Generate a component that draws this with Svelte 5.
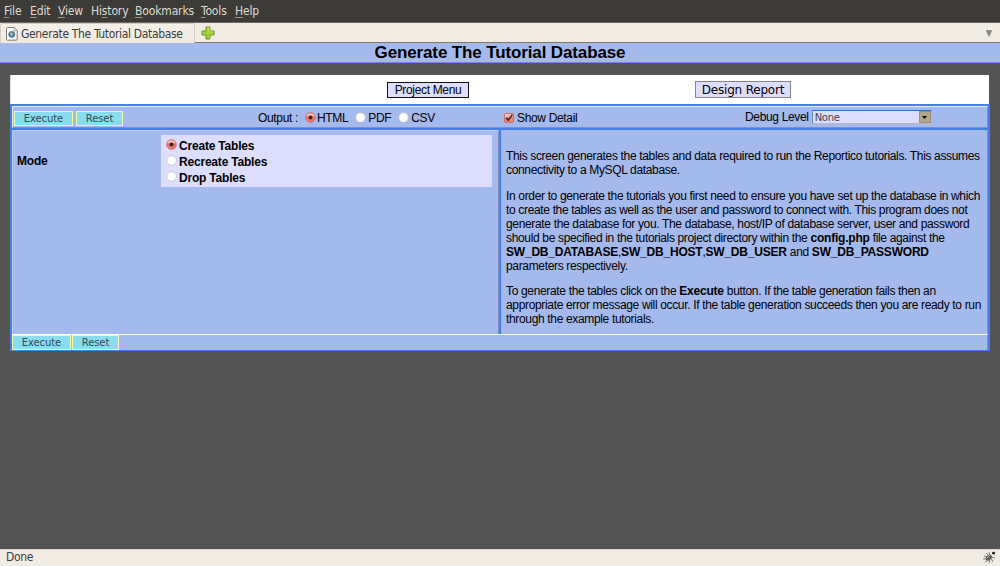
<script>
  const menus = ['File', 'Edit', 'View', 'History', 'Bookmarks', 'Tools', 'Help'];
  const accel = [0, 0, 0, 2, 0, 0, 0];
  const outputs = ['HTML', 'PDF', 'CSV'];
  const modes = ['Create Tables', 'Recreate Tables', 'Drop Tables'];
  let output = $state('HTML');
  let mode = $state('Create Tables');
  let detail = $state(true);
</script>

{#snippet radio(on)}
  <svg class="radio" width="11" height="11" viewBox="0 0 11 11">
    <circle cx="5.5" cy="5.5" r="4.8" fill={on ? '#f07a68' : '#fff'} stroke={on ? '#cc6258' : '#c3c0c8'} stroke-width=".8" />
    {#if on}
      <path d="M1.5 4.5a4.1 4.1 0 0 1 8 0q-4-1.6-8 0z" fill="#fac4b8" />
      <circle cx="5.5" cy="5.5" r="2" fill="#3c2525" />
    {/if}
  </svg>
{/snippet}

<div class="window">
  <nav class="menubar">
    {#each menus as m, i}
      <span>{m.slice(0, accel[i])}<u>{m[accel[i]]}</u>{m.slice(accel[i] + 1)}</span>
    {/each}
  </nav>

  <div class="tabs">
    <div class="tab">
      <svg width="12" height="14" viewBox="0 0 12 14">
        <path d="M1.5.5h6.7l3 3v8.7a1 1 0 0 1-1 1H1.5a1 1 0 0 1-1-1V1.5a1 1 0 0 1 1-1z" fill="#fafaf8" stroke="#777a76" />
        <path d="M8 .8V4h3" fill="#ddd" stroke="#999b96" stroke-width=".7" />
        <circle cx="5.7" cy="7.4" r="3" fill="#4c7bb0" stroke="#42648a" stroke-width=".7" />
        <path d="M4 6l2-.8 1.2 1.5-1.6 2.5L4.4 8z" fill="#a6c789" />
      </svg>
      <span>Generate The Tutorial Database</span>
    </div>
    <svg class="plus" width="14" height="14" viewBox="0 0 14 14">
      <path d="M5 1h4v4h4v4H9v4H5V9H1V5h4z" fill="#a3cd3a" stroke="#6e9628" />
      <path d="M6 2h2v4h4" fill="none" stroke="#c8e573" stroke-width=".9" />
    </svg>
    <svg class="more" width="6" height="7" viewBox="0 0 6 7"><path d="M.3.5h5.4L3 6.3z" fill="#8d8c86" stroke="#6f6d67" stroke-width=".6" /></svg>
  </div>

  <h1><span>Generate The Tutorial Database</span></h1>

  <main>
    <div class="links">
      <button class="project">Project Menu</button>
      <button class="design">Design Report</button>
    </div>

    <div class="frame">
      <div class="bar">
        <button class="act exe">Execute</button>
        <button class="act res">Reset</button>
        <div class="output">
          <span class="lead">Output :</span>
          {#each outputs as o}
            <!-- svelte-ignore a11y_click_events_have_key_events, a11y_no_static_element_interactions -->
            <span class="opt" onclick={() => (output = o)}>{@render radio(output === o)}<span>{o}</span></span>
          {/each}
        </div>
        <!-- svelte-ignore a11y_click_events_have_key_events, a11y_no_static_element_interactions -->
        <div class="detail" onclick={() => (detail = !detail)}>
          <svg width="10" height="10" viewBox="0 0 10 10">
            <rect x=".5" y=".5" width="9" height="9" rx="1" fill={detail ? '#f08371' : '#fff'} stroke="#cc7468" />
            {#if detail}
              <path d="M1 1h8v3Q5 3 1 5z" fill="#f9b9aa" />
              <path d="M2.2 4.8l2 2.5L8.4 1.6" fill="none" stroke="#3d2626" stroke-width="1.6" />
            {/if}
          </svg>
          <span>Show Detail</span>
        </div>
        <div class="debug">
          <span>Debug Level</span>
          <div class="select"><span>None</span><i><svg width="5" height="3" viewBox="0 0 5 3"><path d="M0 0h5L2.5 3z" /></svg></i></div>
        </div>
      </div>

      <div class="body">
        <section class="criteria">
          <b class="label">Mode</b>
          <div class="modes">
            {#each modes as m}
              <!-- svelte-ignore a11y_click_events_have_key_events, a11y_no_static_element_interactions -->
              <div class="mode" onclick={() => (mode = m)}>{@render radio(mode === m)}<b>{m}</b></div>
            {/each}
          </div>
        </section>
        <section class="help">
          <p>This screen generates the tables and data required to run the Reportico tutorials. This assumes<br />connectivity to a MySQL database.</p>
          <p>In order to generate the tutorials you first need to ensure you have set up the database in which<br />to create the tables as well as the user and password to connect with. This program does not<br />generate the database for you. The database, host/IP of database server, user and password<br />should be specified in the tutorials project directory within the <b>config.php</b> file against the<br /><b>SW_DB_DATABASE</b>,<b>SW_DB_HOST</b>,<b>SW_DB_USER</b> and <b>SW_DB_PASSWORD</b><br />parameters respectively.</p>
          <p>To generate the tables click on the <b>Execute</b> button. If the table generation fails then an<br />appropriate error message will occur. If the table generation succeeds then you are ready to run<br />through the example tutorials.</p>
        </section>
      </div>

      <div class="foot">
        <button class="act exe">Execute</button>
        <button class="act res">Reset</button>
      </div>
    </div>
  </main>

  <footer>
    <span>Done</span>
    <svg width="14" height="14" viewBox="0 0 14 14">
      <path d="M3 3l3 3M1 6l4 1M0 9l5 0M2 12l4-3M6 13l1-4M10 12L8 8M12 8L8 7M6 2l1 4" stroke="#85827c" stroke-width="1" />
      <ellipse cx="5.8" cy="7.6" rx="3.5" ry="2.4" transform="rotate(-40 5.8 7.6)" fill="#62615e" />
      <circle cx="10" cy="2.8" r="2.6" fill="#f8f8f6" />
      <circle cx="10.6" cy="3" r="1.6" fill="#222" />
      <path d="M4 8l3-3" stroke="#b5b3ad" />
    </svg>
  </footer>
</div>

<style>
  :global(body) { margin: 0; background: #545454; }
  * { box-sizing: border-box; }
  button { padding: 0; margin: 0; border-radius: 0; display: flex; align-items: center; justify-content: center; white-space: nowrap; }
  svg { display: block; flex: none; }
  b { letter-spacing: -.2px; }
  .window { width: 1000px; height: 566px; display: flex; flex-direction: column; background: #545454; font: 12px/14px "Liberation Sans", Arial, sans-serif; letter-spacing: -.34px; color: #000; overflow: hidden; white-space: nowrap; }
  .menubar { height: 22px; flex: none; background: #3c3b37; color: #dfdbd2; display: grid; grid-template-columns: 26px 28px 33px 44px 66px 34px 40px; padding-left: 4px; font: 12px/22px "DejaVu Sans Condensed", "DejaVu Sans", sans-serif; letter-spacing: -.15px; }
  .menubar u { text-underline-offset: 2px; text-decoration-color: #98948c; }
  .tabs { height: 21px; flex: none; background: #f0ebe3; border-top: 1px solid #6b6963; border-bottom: 1px solid #85765f; display: flex; }
  .tab { width: 195px; height: 20px; padding-left: 5px; display: flex; align-items: center; gap: 3px; border: 1px solid #d5cdc0; border-bottom: 0; border-radius: 3px 3px 0 0; background: linear-gradient(#f5f0e8, #efe9df); font: 12px/20px "DejaVu Sans Condensed", "DejaVu Sans", sans-serif; color: #3c3c3c; }
  .plus { margin: 3px 0 0 6px; }
  .more { margin: 7px 8px 0 auto; }
  h1 { margin: 0; height: 20px; flex: none; background: #a4b9ec; border-bottom: 1px solid #8080f0; font-size: 17px; line-height: 20px; text-align: center; letter-spacing: -.13px; }
  main { margin: 12px 10px 0 10px; }
  .links { background: #fff; height: 29px; margin-right: 1px; display: flex; border-left: 1px solid #ddd; }
  .links button { background: #ddf; color: #000; }
  .project { width: 82px; height: 16px; margin-top: 7px; margin-left: 376px; border: 1px solid #111; font: 12px "Liberation Sans", Arial, sans-serif; letter-spacing: -.34px; }
  .design { width: 96px; height: 17px; margin-top: 6px; margin-left: 226px; border: 1px solid #858585; font: 12px "DejaVu Sans", sans-serif; letter-spacing: -.2px; }
  .frame { height: 247px; border: 2px solid #4580e9; border-bottom-width: 1px; background: #4580e9; display: flex; flex-direction: column; }
  .bar { height: 22px; flex: none; background: #a4b9ec; border: 1px solid #e3eaff; border-right-color: #7e8fc0; border-bottom-color: #7e8fc0; display: grid; grid-template-columns: 62px 182px 246px 241px 1fr; padding: 2px 0 0 1px; align-items: center; }
  .act { background: #88ddee; border: 1px solid #eefaa8; color: #334a4e; font: 10px "DejaVu Sans", sans-serif; height: 15px; letter-spacing: -.1px; }
  .exe { width: 59px; }
  .res { width: 47px; }
  .output, .detail, .debug, .opt { display: flex; align-items: center; }
  .output { padding-bottom: 1px; }
  .lead { width: 47px; }
  .opt { gap: 2px; margin-right: 7px; }
  .opt:nth-child(2) { gap: 1px; }
  .detail { gap: 3px; padding-bottom: 1px; }
  .debug { gap: 3px; padding-bottom: 2px; }
  .select { width: 120px; height: 14px; background: #ddf; border: 1px solid #b9b9c4; border-top-color: #3c6ca3; border-left-color: #6d88b8; display: flex; justify-content: space-between; font: 10px/13px "DejaVu Sans", sans-serif; letter-spacing: -.3px; color: #444; padding-left: 2px; }
  .select i { width: 12px; background: #b3a589; border: 1px solid #9c8f77; display: flex; align-items: center; justify-content: center; }
  .body { margin-top: 2px; height: 202px; flex: none; display: grid; grid-template-columns: 487px 487px; gap: 2px; }
  .body section { background: #a4b9ec; border: 1px solid #bccbf3; border-right-color: #7e8fc0; border-bottom-color: #7e8fc0; }
  .criteria { display: grid; grid-template-columns: 144px 331px; padding: 4px 0 0 4px; align-items: start; }
  .label { padding-top: 19px; }
  .modes { height: 52px; background: #ddf; padding: 2px 0 0 5px; }
  .mode { height: 16px; display: flex; align-items: center; gap: 2px; }
  .mode svg { position: relative; top: -1px; }
  .mode b { padding-top: 1px; }
  .body .help { border-color: #9bb7d5 #7896bd #2c7080 #9bb7d5; padding: 18px 0 0 4px; }
  .help p { margin: 0 0 12px; }
  .help p:nth-child(2) { margin-bottom: 11px; }
  .foot { margin-top: 2px; flex: 1; background: #a4b9ec; border-top: 1px solid #fff; border-right: 1px solid #7e8fc0; display: flex; gap: 1px; }
  footer { margin-top: auto; height: 17px; background: #f0ebe3; border-top: 1px solid #d9d3c9; padding: 0 3px 0 6px; display: flex; justify-content: space-between; font: 12px/15px "DejaVu Sans Condensed", "DejaVu Sans", sans-serif; color: #3c3c3c; }
</style>
